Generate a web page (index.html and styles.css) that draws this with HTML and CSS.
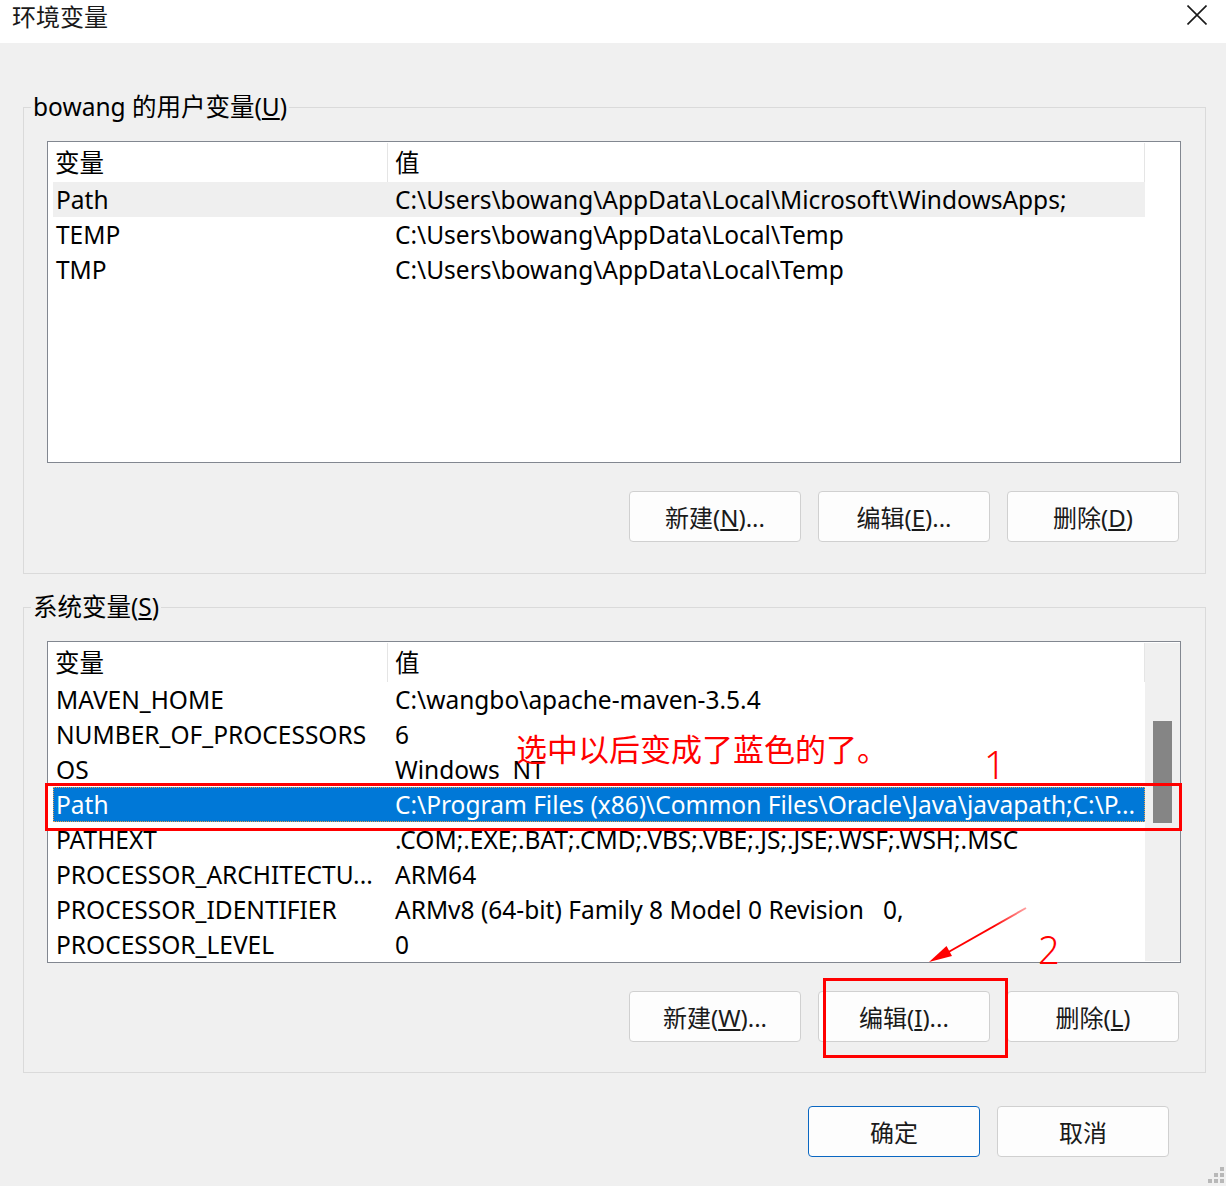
FILE: index.html
```html
<!DOCTYPE html>
<html lang="zh-CN">
<head>
<meta charset="utf-8">
<title>环境变量</title>
<link rel="stylesheet" href="styles.css">
</head>
<body>
<div class="titlebar">
  <span class="title">环境变量</span>
  <svg class="close" width="20" height="20" viewBox="0 0 20 20"><path d="M0.5 0.5 L19.5 19.5 M19.5 0.5 L0.5 19.5" stroke="#1a1a1a" stroke-width="1.6" fill="none"/></svg>
</div>
<div class="content">
  <fieldset class="group">
    <legend>bowang 的用户变量(<u>U</u>)</legend>
    <div class="group-inner">
      <div class="list">
        <div class="rows">
          <div class="row head"><span class="c1">变量</span><span class="c2">值</span></div>
          <div class="row hover"><span class="c1">Path</span><span class="c2">C:\Users\bowang\AppData\Local\Microsoft\WindowsApps;</span></div>
          <div class="row"><span class="c1">TEMP</span><span class="c2">C:\Users\bowang\AppData\Local\Temp</span></div>
          <div class="row"><span class="c1">TMP</span><span class="c2">C:\Users\bowang\AppData\Local\Temp</span></div>
        </div>
      </div>
      <div class="btns">
        <button class="btn">新建(<u>N</u>)...</button>
        <button class="btn">编辑(<u>E</u>)...</button>
        <button class="btn">删除(<u>D</u>)</button>
      </div>
    </div>
  </fieldset>
  <fieldset class="group second">
    <legend>系统变量(<u>S</u>)</legend>
    <div class="group-inner">
      <div class="list">
        <div class="rows">
          <div class="row head"><span class="c1">变量</span><span class="c2">值</span></div>
          <div class="row"><span class="c1">MAVEN_HOME</span><span class="c2">C:\wangbo\apache-maven-3.5.4</span></div>
          <div class="row"><span class="c1">NUMBER_OF_PROCESSORS</span><span class="c2">6</span></div>
          <div class="row"><span class="c1">OS</span><span class="c2">Windows  NT</span></div>
          <div class="row selected"><span class="c1">Path</span><span class="c2">C:\Program Files (x86)\Common Files\Oracle\Java\javapath;C:\P...</span></div>
          <div class="row"><span class="c1">PATHEXT</span><span class="c2">.COM;.EXE;.BAT;.CMD;.VBS;.VBE;.JS;.JSE;.WSF;.WSH;.MSC</span></div>
          <div class="row"><span class="c1">PROCESSOR_ARCHITECTU...</span><span class="c2">ARM64</span></div>
          <div class="row"><span class="c1">PROCESSOR_IDENTIFIER</span><span class="c2">ARMv8 (64-bit) Family 8 Model 0 Revision   0,</span></div>
          <div class="row"><span class="c1">PROCESSOR_LEVEL</span><span class="c2">0</span></div>
        </div>
        <div class="scrollbar"><div class="thumb"></div></div>
      </div>
      <div class="btns">
        <button class="btn">新建(<u>W</u>)...</button>
        <button class="btn">编辑(<u>I</u>)...</button>
        <button class="btn">删除(<u>L</u>)</button>
      </div>
    </div>
  </fieldset>
  <div class="dialog-btns">
    <button class="btn default">确定</button>
    <button class="btn">取消</button>
  </div>
</div>

<div class="note">选中以后变成了蓝色的了。</div>
<div class="num num1">1</div>
<div class="num num2">2</div>
<div class="mark mark1"></div>
<div class="mark mark2"></div>
<svg class="arrow" width="1226" height="1186" viewBox="0 0 1226 1186">
  <defs>
    <linearGradient id="fade" x1="1026" y1="908" x2="946" y2="953" gradientUnits="userSpaceOnUse">
      <stop offset="0" stop-color="#ff4040" stop-opacity="0.5"/>
      <stop offset="0.4" stop-color="#f00"/>
      <stop offset="1" stop-color="#f00"/>
    </linearGradient>
  </defs>
  <path d="M1026 908 L945 954" stroke="url(#fade)" stroke-width="2" fill="none"/>
  <polygon points="929,962 952,956 946.5,946" fill="#f00"/>
</svg>
<svg class="grip" width="18" height="20" viewBox="0 0 18 20">
  <rect x="12" y="1" width="4" height="4" fill="#b8b8b8"/>
  <rect x="6" y="7" width="4" height="4" fill="#b8b8b8"/>
  <rect x="12" y="7" width="4" height="4" fill="#b8b8b8"/>
  <rect x="0" y="13" width="4" height="4" fill="#b8b8b8"/>
  <rect x="6" y="13" width="4" height="4" fill="#b8b8b8"/>
  <rect x="12" y="13" width="4" height="4" fill="#b8b8b8"/>
</svg>
</body>
</html>
```
FILE: styles.css
```css
html, body {
  margin: 0;
  padding: 0;
}
body {
  width: 1226px;
  height: 1186px;
  position: relative;
  overflow: hidden;
  background: #f0f0f0;
  font-family: "Noto Sans", "Noto Sans CJK SC", sans-serif;
  font-size: 24.5px;
  color: #000;
}
.titlebar {
  height: 43px;
  background: #fff;
  display: flex;
  justify-content: space-between;
  align-items: flex-start;
}
.title {
  padding-left: 12px;
  line-height: 32px;
  font-size: 24px;
  font-family: "Noto Sans CJK SC", sans-serif;
  color: #1a1a1a;
}
.close {
  margin: 5px 19px 0 0;
}
.content {
  padding: 49px 20px 0 23px;
}
.group {
  margin: 0;
  padding: 0;
  border: 1px solid #dadada;
  min-width: 0;
}
.group.second {
  margin-top: 18px;
}
.group legend {
  margin-left: 7px;
  padding: 0 2px;
  line-height: 30px;
  font-size: 24.5px;
}
.group-inner {
  padding: 19px 24px 31px 23px;
}
.second .group-inner {
  padding-bottom: 30px;
}
.list {
  box-sizing: border-box;
  height: 322px;
  border: 1px solid #828790;
  background: #fff;
  display: flex;
}
.rows {
  margin-left: 5px;
  width: 1092px;
  flex: none;
}
.row {
  display: flex;
  height: 35px;
  line-height: 35px;
  white-space: pre;
}
.row .c1 {
  box-sizing: border-box;
  width: 335px;
  flex: none;
  padding-left: 3px;
  overflow: hidden;
}
.row .c2 {
  flex: 1;
  padding-left: 7px;
  overflow: hidden;
}
.row.head {
  height: 39px;
  line-height: 39px;
  margin-top: 1px;
}
.row.head .c1 {
  padding-left: 2px;
  border-right: 1px solid #e5e5e5;
}
.row.head .c2 {
  border-right: 1px solid #e5e5e5;
}
.row.hover {
  background: #efefef;
}
.row.selected {
  background: #0078d7;
  color: #fff;
  outline: 1px dotted #e8a050;
  outline-offset: -1px;
}
.scrollbar {
  flex: 1;
  margin: 1px 0;
  background: #f0f0f0;
}
.thumb {
  width: 19px;
  height: 102px;
  margin: 78px 0 0 8px;
  background: #858585;
}
.btns {
  display: flex;
  justify-content: flex-end;
  gap: 17px;
  margin-top: 28px;
  padding-right: 2px;
}
.btn {
  box-sizing: border-box;
  width: 172px;
  height: 51px;
  margin: 0;
  padding: 0;
  background: #fdfdfd;
  border: 1px solid #d0d0d0;
  border-radius: 4px;
  font-family: "Noto Sans", "Noto Sans CJK SC", sans-serif;
  font-size: 24px;
  color: #1a1a1a;
}
.btn.default {
  border-color: #0a67c2;
}
.dialog-btns {
  display: flex;
  justify-content: flex-end;
  gap: 17px;
  margin-top: 33px;
  padding-right: 37px;
}
.note {
  position: absolute;
  left: 516px;
  top: 731px;
  font-family: "Noto Sans CJK SC", sans-serif;
  font-size: 31px;
  line-height: 34px;
  color: #f00;
  white-space: nowrap;
}
.num {
  position: absolute;
  font-family: "Noto Sans", sans-serif;
  font-weight: 300;
  font-size: 38px;
  line-height: 38px;
  color: #f00;
}
.num1 {
  left: 984px;
  top: 745px;
}
.num2 {
  left: 1038px;
  top: 930px;
}
.mark {
  position: absolute;
  box-sizing: border-box;
  border: 3px solid #f00;
}
.mark1 {
  left: 45px;
  top: 783px;
  width: 1137px;
  height: 48px;
}
.mark2 {
  left: 823px;
  top: 978px;
  width: 185px;
  height: 80px;
}
.arrow {
  position: absolute;
  left: 0;
  top: 0;
  pointer-events: none;
}
.grip {
  position: absolute;
  right: 0;
  bottom: 0;
}
```
